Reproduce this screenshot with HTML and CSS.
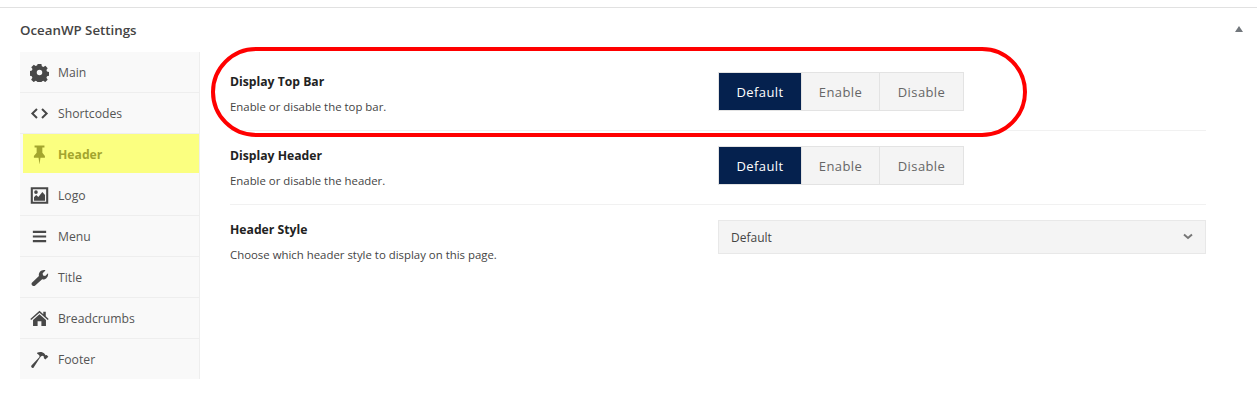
FILE: index.html
```html
<!DOCTYPE html>
<html>
  <head>
    <meta charset="UTF-8" />
    <title>OceanWP Settings</title>
    <link rel="stylesheet" href="styles.css">
  </head>
  <body>
    <div class="metabox">
      <div class="boxhead">
        <h2>OceanWP Settings</h2>
        <span class="toggle"></span>
      </div>
      <div class="boxbody">
        <ul class="tabs">
          <li>
            <svg class="icon" viewBox="0 0 20 20"><path fill-rule="evenodd" d="M8 1h4l.5 2.400 1.600.7 2.100-1.300 2.400 2.600-1.300 2 .6 1.600 2.100.5v3.900l-2.100.5-.6 1.600 1.300 2-2.600 2.600-2-1.300-1.600.6-.4 2.100H8l-.5-2.100-1.600-.6-2 1.300-2.700-2.600 1.300-2-.6-1.600-1.900-.5V8.500l2-.5.6-1.600-1.300-2 2.700-2.600 2 1.300 1.600-.7zM10 7.200a2.900 2.900 0 1 0 0 5.800 2.900 2.900 0 0 0 0-5.800z"/></svg>
            Main
          </li>
          <li>
            <svg class="icon" viewBox="0 0 20 20"><path d="M6.600 4.600 1 10l5.600 5.400 1.500-1.500L4 10l4.100-3.900zM13.400 4.600 19 10l-5.600 5.400-1.500-1.500L16 10l-4.100-3.900z"/></svg>
            Shortcodes
          </li>
          <li class="active">
            <svg class="icon" viewBox="0 0 20 20"><path d="M4.800 .5h10.400v2h-2.200v5.700l2.700 3.300v2h-4.700L10 20.500l-1-7H4.100v-2l2.900-3.300V2.500H4.800z"/></svg>
            Header
          </li>
          <li>
            <svg class="icon" viewBox="0 0 20 20"><path fill-rule="evenodd" d="M.8 1.200h18.400v17.600H.8zM3 3.400v13.200h14V3.400zM4.200 15.400v-3.600l2.300-2.300 2.300 2.200 4.200-5.400 2.800 3.200v5.900zM6.300 4.600a1.900 1.900 0 1 1 0 3.800 1.900 1.900 0 0 1 0-3.800z"/></svg>
            Logo
          </li>
          <li>
            <svg class="icon" viewBox="0 0 20 20"><path d="M3 4h14v2.200H3zM3 8.900h14v2.200H3zM3 13.800h14V16H3z"/></svg>
            Menu
          </li>
          <li>
            <svg class="icon" viewBox="0 0 20 20"><path d="M2 15.600 9.400 8.400C8.700 5 11.600 1.600 15.600 2.200l.7.4-3 2.900.4 2.300 2.300.5 3-2.900c.7 3.800-2.500 7.200-6.200 6.500L5.200 18.700C3.500 20 .6 17.500 2 15.600z"/></svg>
            Title
          </li>
          <li>
            <svg class="icon" viewBox="0 0 20 20"><path fill-rule="evenodd" d="M10 1.800 14 5.400V3h2.600v4.700l3.100 2.800-1 1.100L10 4 1.300 11.600l-1-1.100zM10 5.600l6.800 6v6.400h-4.800v-5H8v5H3.200v-6.400z"/></svg>
            Breadcrumbs
          </li>
          <li>
            <svg class="icon" viewBox="0 0 20 20"><path d="M7.500 2.800C10.500 1.500 13.500 2 15.300 4l1 1.400 1.300-.2 1.700 1.900-3.200 3-1.600-1.700.2-1.300-1.300-1-1.700.5-1.100 1.200L3.700 18.600c-1.200 1-3.300-.8-2.200-2.200L10 7.400l-.2-1.800-2.400-2z"/></svg>
            Footer
          </li>
        </ul>
        <div class="fields">
          <div class="field">
            <div class="info">
              <h4>Display Top Bar</h4>
              <p>Enable or disable the top bar.</p>
            </div>
            <div class="control">
              <div class="btns">
                <span class="on">Default</span><span>Enable</span><span>Disable</span>
              </div>
            </div>
          </div>
          <div class="field">
            <div class="info">
              <h4>Display Header</h4>
              <p>Enable or disable the header.</p>
            </div>
            <div class="control">
              <div class="btns">
                <span class="on">Default</span><span>Enable</span><span>Disable</span>
              </div>
            </div>
          </div>
          <div class="field">
            <div class="info">
              <h4>Header Style</h4>
              <p>Choose which header style to display on this page.</p>
            </div>
            <div class="control">
              <div class="select">
                Default
                <svg class="chev" viewBox="0 0 10 7"><path d="M1 1.500 5 5l4-3.500" /></svg>
              </div>
            </div>
          </div>
        </div>
      </div>
    </div>
    <div class="oval"></div>
  </body>
</html>
```

FILE: styles.css
```css
html, body {
  margin: 0; padding: 0; background-color: #fff;
}
body {
  font-family: "Open Sans", sans-serif;
  color: #32373c; height: 402px; overflow: hidden;
}
.metabox {
  margin-top: 7px; border-top: #e1e1e1 solid 1px;
}
.boxhead {
  display: flex; justify-content: space-between; align-items: center;
  height: 44px; padding: 0 14px 0 20px;
}
.boxhead h2 {
  margin: 0; font-size: 13.3px; font-weight: 600; color: #444;
}
.toggle {
  width: 0; height: 0;
  border-left: 4px solid transparent;
  border-right: 4px solid transparent;
  border-bottom: 6px solid #72777c;
  margin-bottom: 3px;
}
.boxbody {
  display: flex; padding: 0 51px 0 20px;
}
.tabs {
  list-style: none; margin: 0; padding: 0;
  width: 180px; flex: none; box-sizing: border-box;
  background-color: #f9f9f9; border-right: #eee solid 1px;
}
.tabs li {
  display: flex; align-items: center; gap: 9px;
  height: 41px; box-sizing: border-box; padding-left: 10px;
  border-bottom: #eee solid 1px;
  font-size: 12.2px; color: #555;
}
.tabs li:last-child { border-bottom: 0; height: 40px; }
.tabs li.active {
  height: 39px; margin: 0 0 2px 3px; padding: 2px 0 0 7px;
  border-bottom: 0; background-color: #fbff80;
  font-weight: 700; color: #a3a52e;
}
.icon {
  width: 19px; height: 19px; flex: none; fill: #484848;
}
.active .icon { fill: #a3a52e; }
.fields {
  flex: 1; padding-left: 30px;
}
.field {
  display: flex; box-sizing: border-box;
  height: 74px; padding-top: 16px;
  border-bottom: #f1f1f1 solid 1px;
}
.field:first-child { height: 79px; padding-top: 21px; }
.field:last-child { border-bottom: 0; }
.info { width: 488px; flex: none; }
.info h4 {
  margin: 0; font-size: 12.2px; font-weight: 700; line-height: 17px; color: #222;
}
.info p {
  margin: 9px 0 0; font-size: 11.4px; line-height: 15px; color: #444;
}
.control { flex: 1; margin-top: -1px; }
.btns { display: flex; }
.btns span {
  width: 84px; height: 39px; box-sizing: border-box;
  display: flex; align-items: center; justify-content: center;
  background-color: #f4f4f4; border: #e3e3e3 solid 1px; border-left: 0;
  font-size: 13px; letter-spacing: .4px; color: #666;
}
.btns span:nth-child(2) { width: 78px; }
.btns span.on {
  background-color: #05214e; color: #fff; border-left: #e3e3e3 solid 1px;
}
.select {
  display: flex; align-items: center; justify-content: space-between;
  height: 34px; box-sizing: border-box;
  padding: 0 12px;
  background-color: #f4f4f4; border: #e8e8e8 solid 1px;
  font-size: 12px; color: #444;
}
.chev {
  width: 10px; height: 7px; fill: none; stroke: #777; stroke-width: 2;
  margin: -2px 0 0;
}
.oval {
  position: absolute; left: 211px; top: 47px;
  width: 816px; height: 90px; box-sizing: border-box;
  border: #f00 solid 4px; border-radius: 45px;
}
```
